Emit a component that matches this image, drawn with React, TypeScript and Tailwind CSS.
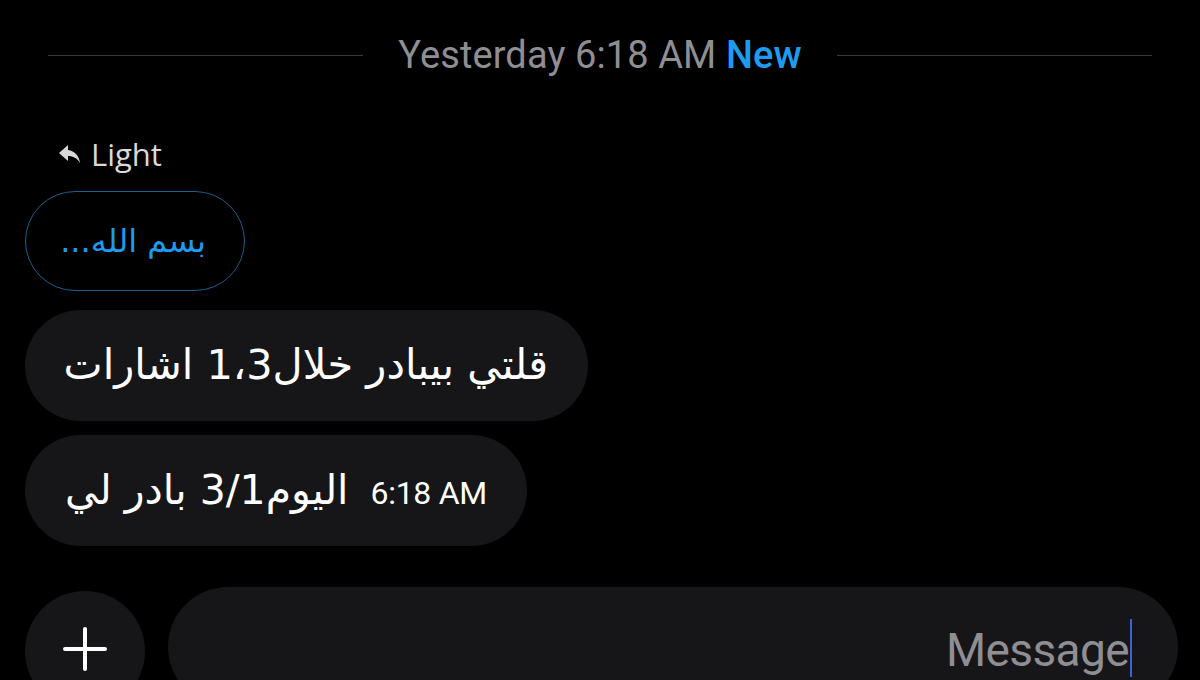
const sf = { fontFamily: 'Roboto, "Liberation Sans", sans-serif' }
const ar = { fontFamily: '"DejaVu Sans", sans-serif' }

export default function App() {
  return (
    <div className="w-[1200px] h-[680px] bg-black overflow-hidden flex flex-col" style={sf}>
      {/* Date divider */}
      <div className="flex items-center gap-[35px] px-[48px] pt-[33px] h-[78px]">
        <div className="flex-1 h-px bg-[#3a3a3c]" />
        <div className="text-[38px] leading-[44px] tracking-[0.1px] text-[#8e8e93] whitespace-nowrap">
          Yesterday 6:18 AM <span className="text-[#1d9bf0] font-medium">New</span>
        </div>
        <div className="flex-1 h-px bg-[#3a3a3c]" />
      </div>

      {/* Reply header */}
      <div className="flex items-center gap-[9px] pl-[58px] mt-[58px] h-[38px]">
        <svg width="24" height="22" viewBox="0 0 24 22" fill="#d6d6d6">
          <path d="M10 2 L1 10 L10 18 L10 13 C15 13 19 15 22 20 C21 13 17 8 10 7 Z" />
        </svg>
        <span className="text-[31px] text-[#d9d9d9]" style={{ fontFamily: '"Open Sans", sans-serif' }}>Light</span>
      </div>

      {/* Replied-to bubble */}
      <div className="pl-[25px] mt-[18px]">
        <div
          dir="rtl"
          className="w-[220px] h-[100px] rounded-full border-[1.5px] border-[#1b5f8c] flex items-center pr-[38px] text-[32px] text-[#1d9bf0]"
          style={ar}
        >
          بسم الله...
        </div>
      </div>

      {/* Messages */}
      <div className="flex flex-col items-start gap-[14px] pl-[25px] mt-[19px]">
        <div
          dir="rtl"
          className="h-[111px] w-[563px] rounded-full bg-[#161618] flex items-center px-[40px] text-[41.5px] text-white whitespace-nowrap"
          style={ar}
        >
          قلتي بيبادر خلال1،3 اشارات
        </div>
        <div className="h-[111px] w-[502px] rounded-full bg-[#161618] flex items-center pl-[40px] text-white">
          <div className="flex items-baseline gap-[22px]">
            <span dir="rtl" className="text-[41px] whitespace-nowrap" style={ar}>
              اليوم3/1 بادر لي
            </span>
            <span className="text-[32px] tracking-[-0.3px]">6:18 AM</span>
          </div>
        </div>
      </div>

      {/* Composer */}
      <div className="flex items-start gap-[23px] pl-[25px] pr-[22px] mt-[41px]">
        <div className="w-[120px] h-[120px] mt-[4px] shrink-0 rounded-full bg-[#161618] flex items-start justify-center pt-[36px]">
          <svg width="44" height="44" viewBox="0 0 44 44" stroke="#ffffff" strokeWidth="4" strokeLinecap="round">
            <line x1="22" y1="2" x2="22" y2="42" />
            <line x1="2" y1="22" x2="42" y2="22" />
          </svg>
        </div>
        <div className="flex-1 h-[120px] rounded-[60px] bg-[#161618] flex items-start justify-end pr-[46px] pt-[34px]">
          <span className="text-[46px] leading-[58px] tracking-[-0.6px] text-[#8e8e93]">Message</span>
          <span className="w-[2px] h-[58px] bg-[#3b62d9] ml-[1px] mt-[-2px]" />
        </div>
      </div>
    </div>
  )
}
